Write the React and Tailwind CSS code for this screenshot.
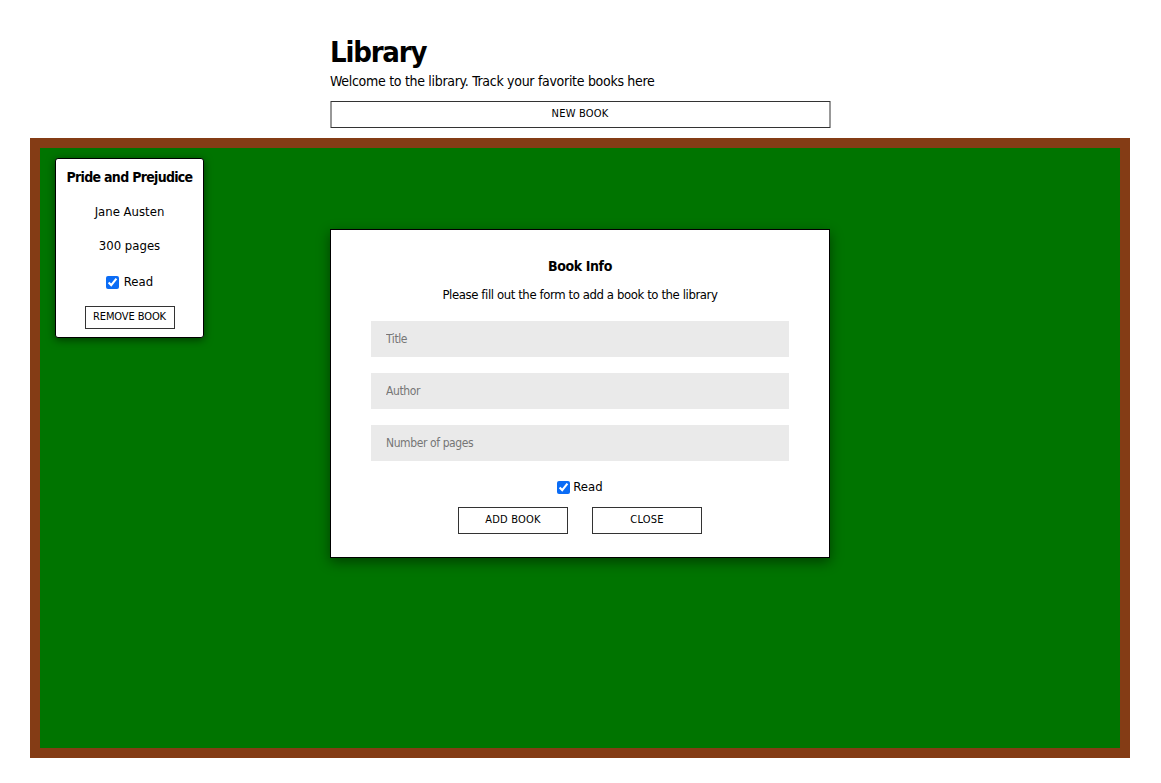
export default function App() {
  return (
    <div className="min-h-screen bg-white pt-[30px] text-black [font-family:'DejaVu_Sans_Condensed',sans-serif]">
      {/* Header */}
      <div className="mx-auto w-[500px] -translate-x-[0.5px]">
        <h1 className="mt-[2px] text-[29px] font-bold leading-[40px] tracking-[-1.2px]">Library</h1>
        <p className="text-[14px] leading-[18px] tracking-[-0.3px]">
          Welcome to the library. Track your favorite books here
        </p>
        <button
          type="button"
          className="mt-[11px] block w-full h-[27px] border border-[#333] text-[11px] tracking-[0.2px]"
        >
          NEW BOOK
        </button>
      </div>

      {/* Shelf */}
      <div className="ml-[30px] mr-[31px] mt-[10px] h-[620px] border-[10px] border-[#843c15] bg-[#007400] relative">
        <div className="absolute left-[15px] top-[10px] w-[149px] rounded-[3px] border border-black bg-white shadow-[0_2px_8px_rgba(0,0,0,0.5)] flex flex-col items-center pt-2 pb-2">
          <h3 className="text-[14px] font-bold leading-[20px] whitespace-nowrap tracking-[-0.7px]">Pride and Prejudice</h3>
          <p className="text-[13px] mt-[15px] leading-[20px]">Jane Austen</p>
          <p className="text-[13px] mt-[14px] leading-[20px]">300 pages</p>
          <label className="mt-[16px] flex items-center gap-[5px] text-[13px] leading-[20px]">
            <input type="checkbox" defaultChecked className="h-[13px] w-[13px] accent-[#0b6cf5]" />
            Read
          </label>
          <button
            type="button"
            className="mt-[14px] h-[23px] w-[90px] border border-[#333] text-[11px] tracking-[-0.1px]"
          >
            REMOVE BOOK
          </button>
        </div>

        {/* Modal */}
        <div className="absolute left-[290px] top-[81px] w-[500px] h-[329px] border border-black bg-white shadow-[0_4px_12px_rgba(0,0,0,0.45)] flex flex-col items-center pt-[26px]">
          <h2 className="text-[14px] font-bold leading-[20px] tracking-[-0.4px]">Book Info</h2>
          <p className="text-[13px] leading-[20px] mt-[9px] tracking-[-0.4px]">
            Please fill out the form to add a book to the library
          </p>
          <div className="mt-[16px] w-[418px] flex flex-col gap-4">
            <input placeholder="Title" className="h-9 bg-[#eaeaea] px-[15px] text-[12px] tracking-[-0.4px] placeholder:text-[#767676] outline-none" />
            <input placeholder="Author" className="h-9 bg-[#eaeaea] px-[15px] text-[12px] tracking-[-0.4px] placeholder:text-[#767676] outline-none" />
            <input placeholder="Number of pages" className="h-9 bg-[#eaeaea] px-[15px] text-[12px] tracking-[-0.4px] placeholder:text-[#767676] outline-none" />
          </div>
          <label className="mt-[16px] flex items-center gap-[3px] text-[13px] leading-[20px]">
            <input type="checkbox" defaultChecked className="h-[13px] w-[13px] accent-[#0b6cf5]" />
            Read
          </label>
          <div className="mt-[10px] flex gap-6">
            <button type="button" className="w-[110px] h-[27px] border border-[#333] text-[11px] tracking-[0.2px]">
              ADD BOOK
            </button>
            <button type="button" className="w-[110px] h-[27px] border border-[#333] text-[11px] tracking-[0.2px]">
              CLOSE
            </button>
          </div>
        </div>
      </div>
    </div>
  );
}
